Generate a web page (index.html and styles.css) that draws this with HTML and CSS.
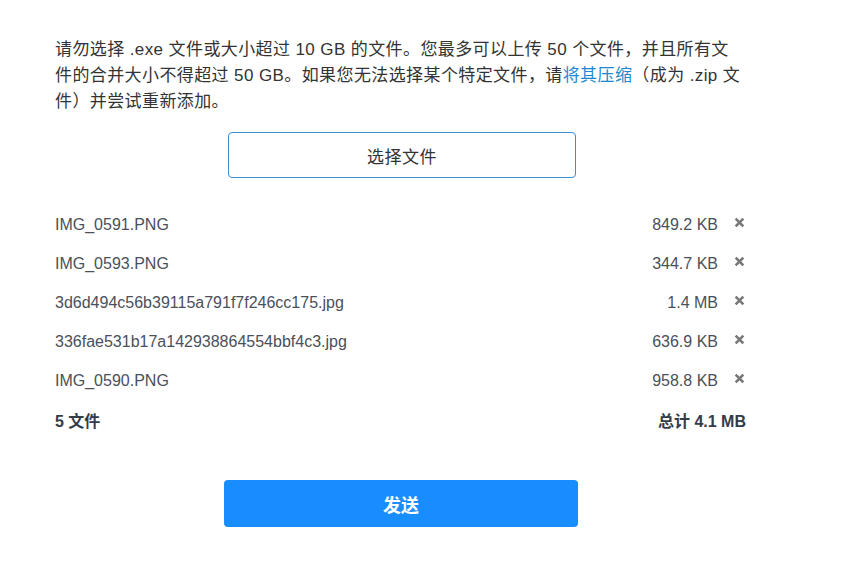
FILE: index.html
```html
<!DOCTYPE html>
<html lang="zh-CN">
<head>
<meta charset="utf-8">
<link rel="stylesheet" href="styles.css">
</head>
<body>
<div class="panel">
  <p class="note">请勿选择 .exe 文件或大小超过 10 GB 的文件。您最多可以上传 50 个文件，并且所有文件的合并大小不得超过 50 GB。如果您无法选择某个特定文件，请<a class="link" href="#">将其压缩</a>（成为 .zip 文件）并尝试重新添加。</p>
  <div class="pick-wrap"><button class="pick">选择文件</button></div>
  <ul class="files">
    <li class="file"><span class="name">IMG_0591.PNG</span><span class="size">849.2 KB</span><span class="remove"><svg viewBox="0 0 10 10" width="11" height="11"><path d="M1.5 1.5L8.5 8.5M8.5 1.5L1.5 8.5"/></svg></span></li>
    <li class="file"><span class="name">IMG_0593.PNG</span><span class="size">344.7 KB</span><span class="remove"><svg viewBox="0 0 10 10" width="11" height="11"><path d="M1.5 1.5L8.5 8.5M8.5 1.5L1.5 8.5"/></svg></span></li>
    <li class="file"><span class="name">3d6d494c56b39115a791f7f246cc175.jpg</span><span class="size">1.4 MB</span><span class="remove"><svg viewBox="0 0 10 10" width="11" height="11"><path d="M1.5 1.5L8.5 8.5M8.5 1.5L1.5 8.5"/></svg></span></li>
    <li class="file"><span class="name">336fae531b17a142938864554bbf4c3.jpg</span><span class="size">636.9 KB</span><span class="remove"><svg viewBox="0 0 10 10" width="11" height="11"><path d="M1.5 1.5L8.5 8.5M8.5 1.5L1.5 8.5"/></svg></span></li>
    <li class="file"><span class="name">IMG_0590.PNG</span><span class="size">958.8 KB</span><span class="remove"><svg viewBox="0 0 10 10" width="11" height="11"><path d="M1.5 1.5L8.5 8.5M8.5 1.5L1.5 8.5"/></svg></span></li>
  </ul>
  <div class="total"><span>5 文件</span><span>总计 4.1 MB</span></div>
  <div class="send-wrap"><button class="send">发送</button></div>
</div>
</body>
</html>
```
FILE: styles.css
```css
html, body {
  margin: 0;
  padding: 0;
  background: #fff;
}
body {
  font-family: "Liberation Sans", "Noto Sans CJK SC", sans-serif;
  color: #333;
}
.panel {
  width: 692px;
  margin-left: 55px;
  padding-top: 37px;
}
.note {
  width: 688px;
  margin: 0;
  font-size: 17px;
  letter-spacing: 0.4px;
  line-height: 26px;
  color: #333;
}
.link {
  color: #1e88d0;
  text-decoration: none;
}
.pick-wrap {
  display: flex;
  justify-content: center;
  margin-top: 17px;
  padding-left: 2px;
}
.pick {
  width: 348px;
  height: 46px;
  border: 1px solid #3b8fd4;
  border-radius: 4px;
  background: #fff;
  font-family: inherit;
  font-size: 17px;
  letter-spacing: 0.5px;
  color: #333;
}
.files {
  list-style: none;
  margin: 27px 0 0;
  padding: 0;
}
.file {
  display: flex;
  align-items: center;
  height: 39px;
  font-size: 16px;
  color: #4a505a;
}
.name {
  flex: 1;
}
.size {
  text-align: right;
}
.remove {
  width: 29px;
  display: flex;
  justify-content: flex-end;
  padding-right: 2px;
  box-sizing: border-box;
  margin-top: -5px;
}
.remove svg path {
  stroke: #787878;
  stroke-width: 2.4;
  fill: none;
}
.total {
  display: flex;
  justify-content: space-between;
  align-items: center;
  height: 40px;
  font-size: 16px;
  font-weight: bold;
  color: #333c48;
  padding-right: 1px;
}
.send-wrap {
  display: flex;
  justify-content: center;
  margin-top: 40px;
}
.send {
  width: 354px;
  height: 47px;
  border: none;
  border-radius: 4px;
  background: #188dfd;
  color: #fff;
  font-family: inherit;
  font-size: 18px;
  font-weight: bold;
}
```
